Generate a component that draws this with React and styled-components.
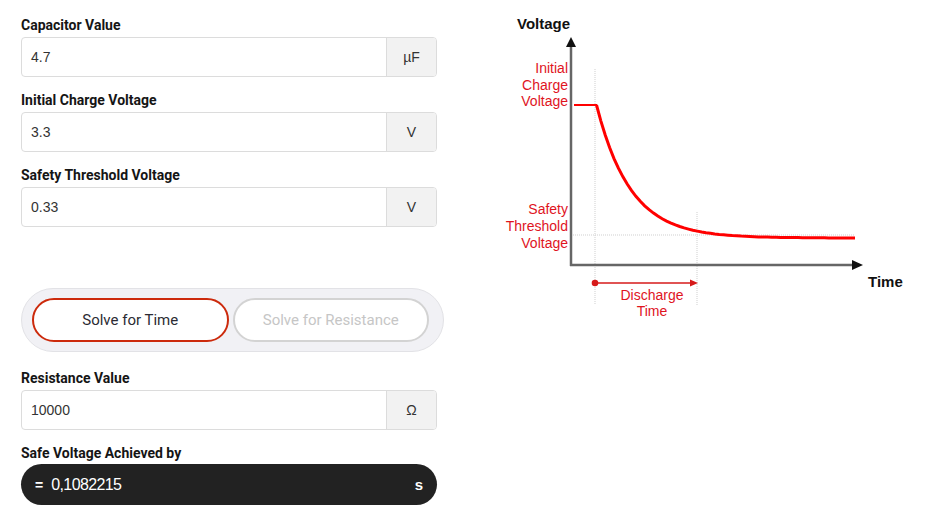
import React, { useState } from "react";
import styled, { createGlobalStyle } from "styled-components";

const GlobalStyle = createGlobalStyle`
  body {
    margin: 0;
    background: #fff;
    font-family: Roboto, "Liberation Sans", sans-serif;
  }
`;

const fields = [
  { label: "Capacitor Value", value: "4.7", unit: "µF" },
  { label: "Initial Charge Voltage", value: "3.3", unit: "V" },
  { label: "Safety Threshold Voltage", value: "0.33", unit: "V" },
];

// exponential discharge curve, sampled in page coordinates
const curve = Array.from({ length: 60 }, (_, i) => {
  const x = 596.5 + (i * (855 - 596.5)) / 59;
  const y = 238 - 133 * Math.exp(-(x - 596.5) / 34);
  return `${x.toFixed(1)},${y.toFixed(1)}`;
}).join(" ");

const Field = ({ label, value, unit }) => (
  <Group>
    <Label>{label}</Label>
    <InputRow>
      <Value>{value}</Value>
      <Unit>{unit}</Unit>
    </InputRow>
  </Group>
);

const Chart = () => (
  <Svg width="420" height="330" viewBox="500 0 420 330">
    <text x="517" y="29" fontSize="15" fontWeight="700" fill="#111">
      Voltage
    </text>
    <text x="868" y="287" fontSize="15" fontWeight="700" fill="#111">
      Time
    </text>

    {/* guide lines */}
    <g stroke="#cfcfcf" strokeWidth="1" strokeDasharray="1 1">
      <line x1="595" y1="69" x2="595" y2="305" />
      <line x1="697" y1="212" x2="697" y2="305" />
      <line x1="571" y1="235" x2="855" y2="235" />
    </g>

    {/* axes */}
    <g stroke="#666" strokeWidth="2.5">
      <line x1="571" y1="44" x2="571" y2="266" />
      <line x1="570" y1="265" x2="854" y2="265" />
    </g>
    <polygon points="571,37 566,47 576,47" fill="#111" />
    <polygon points="863,265 852,260 852,270" fill="#111" />

    {/* curve */}
    <line x1="574" y1="105" x2="597" y2="105" stroke="#f00" strokeWidth="2" />
    <polyline points={curve} fill="none" stroke="#f00" strokeWidth="3" />

    {/* discharge arrow */}
    <circle cx="595" cy="283" r="3.3" fill="#d61a1a" />
    <line x1="595" y1="283" x2="691" y2="283" stroke="#d61a1a" strokeWidth="1.3" />
    <polygon points="698,283 690,279.5 690,286.5" fill="#d61a1a" />

    <g fill="#e0141e" fontSize="14" textAnchor="end">
      <text x="568" y="72.5">Initial</text>
      <text x="568" y="89.5">Charge</text>
      <text x="568" y="106">Voltage</text>
      <text x="568" y="213.5">Safety</text>
      <text x="568" y="230.5">Threshold</text>
      <text x="568" y="247.5">Voltage</text>
    </g>
    <g fill="#e0141e" fontSize="14" textAnchor="middle">
      <text x="652" y="299.5">Discharge</text>
      <text x="652" y="316">Time</text>
    </g>
  </Svg>
);

const App = () => {
  const [mode, setMode] = useState("time");

  return (
    <>
      <GlobalStyle />
      <Page>
        <Form>
          {fields.map((f) => (
            <Field key={f.label} {...f} />
          ))}

          <Toggle>
            <ToggleButton active={mode === "time"} onClick={() => setMode("time")}>
              Solve for Time
            </ToggleButton>
            <ToggleButton
              active={mode === "resistance"}
              onClick={() => setMode("resistance")}
            >
              Solve for Resistance
            </ToggleButton>
          </Toggle>

          <Field label="Resistance Value" value="10000" unit="Ω" />

          <Group>
            <Label tight>Safe Voltage Achieved by</Label>
            <Result>
              <Eq>=</Eq>
              <ResultValue>0,1082215</ResultValue>
              <ResultUnit>s</ResultUnit>
            </Result>
          </Group>
        </Form>
        <Chart />
      </Page>
    </>
  );
};

export default App;

const Page = styled.div`
  display: flex;
  align-items: flex-start;
  gap: 56px;
  padding-left: 21px;
  width: 931px;
  height: 517px;
  box-sizing: border-box;
  overflow: hidden;
`;

const Form = styled.div`
  display: flex;
  flex-direction: column;
  width: 423px;
  padding-top: 15px;
`;

const Group = styled.div`
  width: 416px;
  margin-bottom: 13px;
`;

const Label = styled.div`
  font-size: 14px;
  font-weight: 700;
  line-height: 21px;
  color: #151515;
  margin-bottom: ${(p) => (p.tight ? "0" : "1px")};
`;

const InputRow = styled.div`
  display: flex;
  height: 40px;
  border: 1px solid #dcdcdc;
  border-radius: 4px;
  box-sizing: border-box;
  overflow: hidden;
`;

const Value = styled.div`
  flex: 1;
  display: flex;
  align-items: center;
  padding-left: 9px;
  font-family: "Liberation Sans", Arial, sans-serif;
  font-size: 14px;
  color: #333;
`;

const Unit = styled.div`
  width: 49px;
  display: flex;
  align-items: center;
  justify-content: center;
  background: #f2f2f2;
  border-left: 1px solid #dcdcdc;
  font-family: "Liberation Sans", Arial, sans-serif;
  font-size: 14px;
  color: #333;
`;

const Toggle = styled.div`
  display: grid;
  grid-template-columns: 1fr 1fr;
  gap: 4px;
  margin: 48px 0 16px;
  padding: 9px 14px 9px 10px;
  height: 64px;
  box-sizing: border-box;
  background: #f1f1f5;
  border: 1px solid #e2e2e6;
  border-radius: 32px;
`;

const ToggleButton = styled.button`
  height: 44px;
  border-radius: 22px;
  background: #fff;
  border: 2px solid ${(p) => (p.active ? "#cc2a0c" : "#d3d3d3")};
  color: ${(p) => (p.active ? "#2b2b33" : "#c6c6c6")};
  font-family: Roboto, "Liberation Sans", sans-serif;
  font-size: 15px;
  cursor: pointer;
`;

const Result = styled.div`
  display: flex;
  align-items: center;
  height: 41px;
  padding: 0 14px;
  background: #222;
  border-radius: 21px;
  color: #fff;
`;

const Eq = styled.span`
  font-family: "Liberation Sans", sans-serif;
  font-weight: 700;
  font-size: 14px;
  margin-right: 8px;
`;

const ResultValue = styled.span`
  flex: 1;
  font-family: "Liberation Sans", Arial, sans-serif;
  font-size: 16px;
  letter-spacing: -0.6px;
`;

const ResultUnit = styled.span`
  font-family: "Liberation Sans", sans-serif;
  font-weight: 700;
  font-size: 15px;
`;

const Svg = styled.svg`
  display: block;
  flex: none;
  font-family: "Liberation Sans", Arial, sans-serif;
`;
